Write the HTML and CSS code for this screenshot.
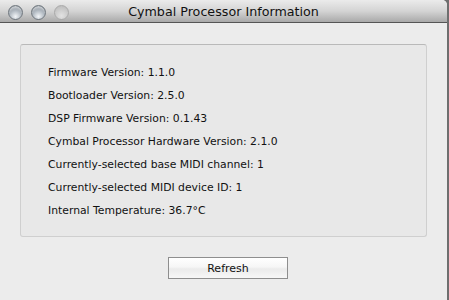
FILE: index.html
```html
<!DOCTYPE html>
<html lang="en">

<head>
    <meta charset="UTF-8">
    <meta name="viewport" content="width=device-width, initial-scale=1.0">
    <title>Cymbal Processor Information</title>
    <link rel="stylesheet" href="styles.css">
</head>

<body>
    <div class="window">
        <!-- Title Bar -->
        <div class="titlebar">
            <div class="lights">
                <span class="light"></span>
                <span class="light"></span>
                <span class="light disabled"></span>
            </div>
            <div class="title">Cymbal Processor Information</div>
        </div>

        <!-- Info Box -->
        <div class="content">
            <div class="info-box">
                <p>Firmware Version: 1.1.0</p>
                <p>Bootloader Version: 2.5.0</p>
                <p>DSP Firmware Version: 0.1.43</p>
                <p>Cymbal Processor Hardware Version: 2.1.0</p>
                <p>Currently-selected base MIDI channel: 1</p>
                <p>Currently-selected MIDI device ID: 1</p>
                <p>Internal Temperature: 36.7°C</p>
            </div>

            <div class="actions">
                <button type="button">Refresh</button>
            </div>
        </div>
    </div>
</body>

</html>
```

FILE: styles.css
```css
body {
    margin: 0;
    background-color: #6e6e6e;
    font-family: "Lucida Grande", "DejaVu Sans", sans-serif;
    color: #111;
}

.window {
    width: 447px;
    height: 300px;
    background-color: #ececec;
    border-top-right-radius: 5px;
    overflow: hidden;
}

.titlebar {
    position: relative;
    height: 22px;
    background: linear-gradient(#ebebeb, #d4d4d4 50%, #a9a9a9);
    border-bottom: 1px solid #555;
}

.lights {
    display: flex;
    gap: 8px;
    padding: 5px 0 0 8px;
}

.light {
    width: 13px;
    height: 13px;
    border-radius: 50%;
    border: 1px solid #6f767d;
    background: radial-gradient(circle at 50% 80%, #f2f5f8 0, #b4bcc4 45%, #747c85 100%);
    box-shadow: inset 0 3px 2px -1px rgba(255, 255, 255, 0.55);
}

.light.disabled {
    border-color: #a9a9a9;
    background: radial-gradient(circle at 50% 75%, #e2e2e2 0, #cdcdcd 50%, #b6b6b6 100%);
    box-shadow: none;
}

.title {
    position: absolute;
    top: 4px;
    left: 0;
    right: 0;
    text-align: center;
    font-size: 12.7px;
    color: #111;
}

.content {
    padding: 21px 0 0 20px;
}

.info-box {
    width: 405px;
    height: 175px;
    padding-top: 16px;
    border: 1px solid #cfcfcf;
    border-top-color: #b9b9b9;
    border-radius: 3px;
    background-color: #e8e8e8;
    font-size: 10.8px;
}

.info-box p {
    margin: 0;
    padding-left: 27px;
    line-height: 23px;
}

.actions {
    padding: 20px 0 0 148px;
}

.actions button {
    width: 120px;
    height: 22px;
    font-family: inherit;
    font-size: 11px;
    color: #111;
    border: 1px solid #8e8e8e;
    border-radius: 0;
    background: linear-gradient(#ffffff, #f6f6f6 45%, #ebebeb 55%, #f7f7f7);
    padding: 1px 0 0;
}
```
